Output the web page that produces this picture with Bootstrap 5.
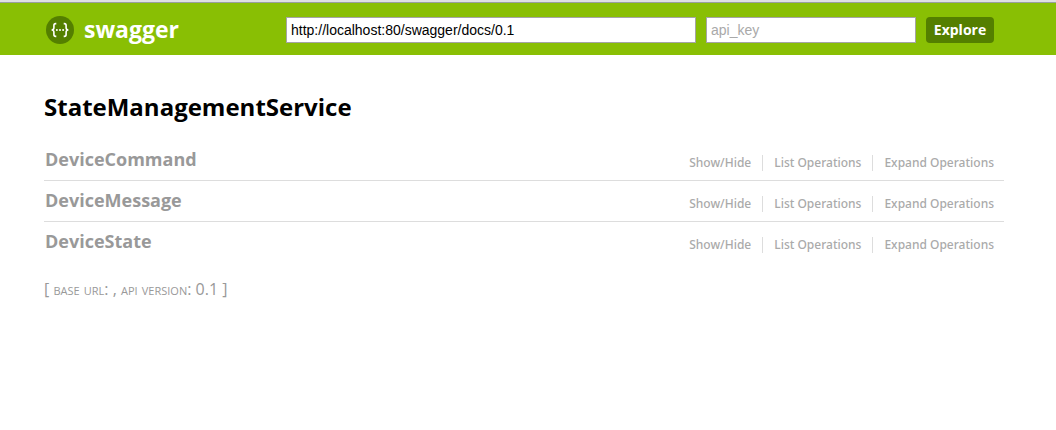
<!DOCTYPE html>
<html lang="en">
<head>
<meta charset="utf-8">
<meta name="viewport" content="width=device-width, initial-scale=1">
<title>Swagger UI</title>
<link href="https://cdn.jsdelivr.net/npm/bootstrap@5.3.0/dist/css/bootstrap.min.css" rel="stylesheet">
<style>
  body { font-family: "Open Sans", "Noto Sans", sans-serif; color: #000; background: #fff; }
  .page-wrap { max-width: 960px; margin: 0 auto; }
  .page-area { padding: 0 52px 0 44px; }
  .top-bar { background: #89bf04; border-top: 1px solid #999f9f; }
  .window-edge { height: 2px; background: #dfe0e2; }
  .top-inner { height: 52px; padding: 2px 10px 0 2px; gap: 10px; }
  .brand-link { color: #fff; font-weight: 700; font-size: 23px; line-height: 28px; gap: 10px; }
  .brand-link:hover { color: #fff; }
  .brand-link span { margin-bottom: 2px; }
  .field-box { height: 26px; padding: 0 4px; border: 1px solid #a5a5a5; border-radius: 0; font: 14px/20px "Liberation Sans", Arial, sans-serif; color: #000; }
  .field-box::placeholder { color: #a9a9a9; }
  .url-box { width: 410px; }
  .key-box { width: 210px; }
  .explore-btn { height: 26px; padding: 0; width: 68px; border: 0; border-radius: 4px; background: #547f00; color: #fff; font-size: 14px; line-height: 26px; font-weight: 700; }
  .explore-btn:hover { background: #476b00; color: #fff; }
  .api-title { font-size: 24px; line-height: 32px; font-weight: 700; margin: 36px 0 17px; }
  .resource-row { height: 41px; padding: 0 10px 0 1px; border-bottom: 1px solid #ddd; }
  .resource-row:last-child { border-bottom-color: transparent; }
  .resource-name { font-size: 18px; line-height: 26px; font-weight: 700; margin: 0; padding-bottom: 2px; }
  .resource-name a { color: #999; }
  .op-links { padding-top: 5px; }
  .op-links li { font: 500 12px/16px "Noto Sans", "Open Sans", sans-serif; padding: 0 11px; border-left: 1px solid #ddd; }
  .op-links li:first-child { border-left: 0; }
  .op-links li:last-child { padding-right: 0; }
  .op-links a { color: #aaa; }
  .api-info { color: #999; font-size: 16px; line-height: 20px; margin: 16px 0 0; }
  .api-info span { font-variant: small-caps; }
</style>
</head>
<body>
<div class="window-edge"></div>
<header class="top-bar page-area">
  <form class="page-wrap top-inner d-flex align-items-center" onsubmit="return false">
    <a class="brand-link d-flex align-items-center text-decoration-none me-auto" href="#">
      <svg width="28" height="28" viewBox="0 0 28 28" aria-hidden="true">
        <circle cx="14" cy="14" r="14" fill="#547f00"/>
        <g fill="none" stroke="#fff" stroke-width="1.6">
          <path d="M10.3 7.6H9.6Q7.9 7.6 7.9 9.4V11.8Q7.9 14 5.6 14Q7.9 14 7.9 16.2V18.6Q7.9 20.4 9.6 20.4H10.3"/>
          <path d="M17.7 7.6H18.4Q20.1 7.6 20.1 9.4V11.8Q20.1 14 22.4 14Q20.1 14 20.1 16.2V18.6Q20.1 20.4 18.4 20.4H17.7"/>
        </g>
        <g fill="#fff"><circle cx="10.9" cy="14" r="1"/><circle cx="14" cy="14" r="1"/><circle cx="17.1" cy="14" r="1"/></g>
      </svg>
      <span>swagger</span>
    </a>
    <input class="field-box url-box" type="text" aria-label="API URL" value="http://localhost:80/swagger/docs/0.1">
    <input class="field-box key-box" type="text" aria-label="API key" placeholder="api_key">
    <button class="btn explore-btn" type="submit">Explore</button>
  </form>
</header>
<div class="page-area">
  <main class="page-wrap">
    <h1 class="api-title">StateManagementService</h1>
    <ul class="list-unstyled mb-0">
      <li class="resource-row d-flex justify-content-between align-items-center">
        <h2 class="resource-name"><a class="text-decoration-none" href="#DeviceCommand">DeviceCommand</a></h2>
        <ul class="op-links list-unstyled d-flex mb-0">
          <li><a class="text-decoration-none" href="#">Show/Hide</a></li>
          <li><a class="text-decoration-none" href="#">List Operations</a></li>
          <li><a class="text-decoration-none" href="#">Expand Operations</a></li>
        </ul>
      </li>
      <li class="resource-row d-flex justify-content-between align-items-center">
        <h2 class="resource-name"><a class="text-decoration-none" href="#DeviceMessage">DeviceMessage</a></h2>
        <ul class="op-links list-unstyled d-flex mb-0">
          <li><a class="text-decoration-none" href="#">Show/Hide</a></li>
          <li><a class="text-decoration-none" href="#">List Operations</a></li>
          <li><a class="text-decoration-none" href="#">Expand Operations</a></li>
        </ul>
      </li>
      <li class="resource-row d-flex justify-content-between align-items-center">
        <h2 class="resource-name"><a class="text-decoration-none" href="#DeviceState">DeviceState</a></h2>
        <ul class="op-links list-unstyled d-flex mb-0">
          <li><a class="text-decoration-none" href="#">Show/Hide</a></li>
          <li><a class="text-decoration-none" href="#">List Operations</a></li>
          <li><a class="text-decoration-none" href="#">Expand Operations</a></li>
        </ul>
      </li>
    </ul>
    <footer class="api-info">[ <span>base url</span>: , <span>api version</span>: 0.1 ]</footer>
  </main>
</div>
<script src="https://cdn.jsdelivr.net/npm/bootstrap@5.3.0/dist/js/bootstrap.bundle.min.js"></script>
</body>
</html>
